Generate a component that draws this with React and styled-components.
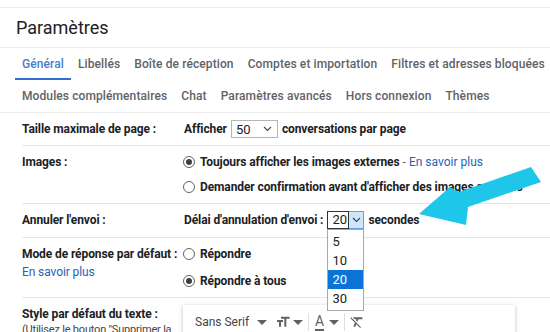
import React from 'react';
import styled, { createGlobalStyle } from 'styled-components';

const GlobalStyle = createGlobalStyle`
    html, body {
        margin: 0;
        padding: 0;
        background: #fff;
    }
    body {
        font-family: Roboto, "Liberation Sans", Arial, sans-serif;
        color: #202124;
    }
`;

const tabsTop = ['Général', 'Libellés', 'Boîte de réception', 'Comptes et importation', 'Filtres et adresses bloquées'];
const tabsBottom = ['Modules complémentaires', 'Chat', 'Paramètres avancés', 'Hors connexion', 'Thèmes'];
const delays = ['5', '10', '20', '30'];

const Caret = () => (
    <svg width="10" height="10" viewBox="7 7 10 10">
        <path d="M7 10l5 5 5-5z" fill="#5f6368" />
    </svg>
);

const Chevron = () => (
    <svg width="9" height="6" viewBox="0 0 9 6">
        <polyline points="1,1 4.5,4.5 8,1" fill="none" stroke="#444" strokeWidth="1.1" />
    </svg>
);

const App = () => {
    return (
        <Page>
            <GlobalStyle />
            <TitleBar>Paramètres</TitleBar>

            <TabRow>
                {tabsTop.map((t, i) => (
                    <Tab key={t} $active={i === 0}>{t}</Tab>
                ))}
            </TabRow>
            <TabRow $last>
                {tabsBottom.map((t) => (
                    <Tab key={t}>{t}</Tab>
                ))}
            </TabRow>

            <Settings>
                <Row>
                    <Label>Taille maximale de page :</Label>
                    <Inline>
                        <Strong>Afficher</Strong>
                        <SelectBox $width={47}>
                            <span>50</span>
                            <Chevron />
                        </SelectBox>
                        <Strong>conversations par page</Strong>
                    </Inline>
                </Row>

                <Row>
                    <Label>Images :</Label>
                    <Stack>
                        <RadioLine>
                            <Radio $checked />
                            <Strong>Toujours afficher les images externes</Strong>
                            <Dash>-</Dash>
                            <Link>En savoir plus</Link>
                        </RadioLine>
                        <RadioLine>
                            <Radio />
                            <Strong>Demander confirmation avant d'afficher des images externes</Strong>
                        </RadioLine>
                    </Stack>
                </Row>

                <Row $pb={8}>
                    <Label>Annuler l'envoi :</Label>
                    <Inline>
                        <Strong>Délai d'annulation d'envoi :</Strong>
                        <OpenSelect>
                            <SelectValue>20</SelectValue>
                            <SelectButton><Chevron /></SelectButton>
                            <DropList>
                                {delays.map((d) => (
                                    <DropItem key={d} $selected={d === '20'}>{d}</DropItem>
                                ))}
                            </DropList>
                        </OpenSelect>
                        <Strong>secondes</Strong>
                    </Inline>
                </Row>

                <Row>
                    <Label>
                        Mode de réponse par défaut :
                        <Link as="div">En savoir plus</Link>
                    </Label>
                    <Stack $gap={9}>
                        <RadioLine>
                            <Radio />
                            <Strong>Répondre</Strong>
                        </RadioLine>
                        <RadioLine>
                            <Radio $checked />
                            <Strong>Répondre à tous</Strong>
                        </RadioLine>
                    </Stack>
                </Row>

                <Row $last>
                    <Label>
                        Style par défaut du texte :
                        <Hint>(Utilisez le bouton "Supprimer la mise en forme")</Hint>
                    </Label>
                    <Toolbar>
                        <FontName>Sans Serif</FontName>
                        <Caret />
                        <ToolGroup $ml={8}>
                            <svg width="16" height="16" viewBox="0 0 24 24">
                                <path d="M9 4v3h5v12h3V7h5V4H9zm-6 8h3v7h3v-7h3V9H3v3z" fill="#5f6368" />
                            </svg>
                            <Caret />
                        </ToolGroup>
                        <Divider />
                        <ToolGroup $ml={6}>
                            <ColorA>A</ColorA>
                            <Caret />
                        </ToolGroup>
                        <Divider />
                        <ToolGroup $ml={4}>
                            <svg width="16" height="16" viewBox="0 0 24 24">
                                <path d="M3.27 5L2 6.27l6.97 6.97L6.5 19h3l1.57-3.66L16.73 21 18 19.73 3.55 5.27 3.27 5zM6 5v.18L8.82 8h2.4l-.72 1.68 2.1 2.1L14.21 8H20V5H6z" fill="#5f6368" />
                            </svg>
                        </ToolGroup>
                    </Toolbar>
                </Row>
            </Settings>

            {/* arrow drawn on top of the screenshot */}
            <Overlay width="550" height="332" viewBox="0 0 550 332">
                <polygon
                    points="419,214 450,187 459,192 531,167 541,182 468,207 466,225"
                    fill="#1ec6ea"
                />
            </Overlay>
        </Page>
    );
};

const Page = styled.div`
    position: relative;
    width: 550px;
    height: 332px;
    overflow: hidden;
    padding-top: 7px;
    box-sizing: border-box;
`;

const TitleBar = styled.div`
    height: 39px;
    line-height: 40px;
    padding-left: 16px;
    border-top: 1px solid #ececec;
    border-bottom: 1px solid #ececec;
    font-size: 18px;
    color: #202124;
`;

const TabRow = styled.div`
    display: flex;
    height: 32px;
    padding-left: 15px;
    white-space: nowrap;
    border-bottom: ${(p) => (p.$last ? '1px solid #ececec' : 'none')};
`;

const Tab = styled.div`
    display: flex;
    align-items: center;
    padding: 0 7px;
    font-size: 12px;
    font-weight: 500;
    letter-spacing: 0.1px;
    color: ${(p) => (p.$active ? '#4a80c8' : '#5f6368')};
    box-shadow: ${(p) => (p.$active ? 'inset 0 -2px 0 #2f6fd0' : 'none')};
`;

const Settings = styled.div`
    padding-left: 22px;
`;

const Row = styled.div`
    display: grid;
    grid-template-columns: 162px 1fr;
    padding: 7px 0 ${(p) => p.$pb ?? 7}px;
    border-bottom: ${(p) => (p.$last ? 'none' : '1px solid #e6e6e6')};
`;

const Label = styled.div`
    font-size: 12px;
    font-weight: 700;
    line-height: 18px;
    letter-spacing: -0.1px;
    color: #202124;
    white-space: nowrap;
`;

const Hint = styled.div`
    width: 150px;
    font-size: 11px;
    font-weight: 400;
    line-height: 14px;
    letter-spacing: -0.2px;
    color: #444;
    white-space: normal;
`;

const Inline = styled.div`
    display: flex;
    align-items: center;
    gap: 4px;
    height: 18px;
    white-space: nowrap;
`;

const Stack = styled.div`
    display: flex;
    flex-direction: column;
    gap: ${(p) => p.$gap ?? 7}px;
`;

const Strong = styled.span`
    font-size: 12px;
    font-weight: 700;
    line-height: 18px;
    letter-spacing: -0.1px;
    color: #202124;
    white-space: nowrap;
`;

const Dash = styled.span`
    font-size: 12px;
    color: #5f6368;
    margin: 0 3px;
`;

const Link = styled.span`
    font-size: 12px;
    font-weight: 400;
    line-height: 18px;
    color: #2a62b8;
    white-space: nowrap;
`;

const RadioLine = styled.div`
    display: flex;
    align-items: center;
    height: 18px;
    margin-left: -1px;
`;

const Radio = styled.span`
    position: relative;
    width: 10px;
    height: 10px;
    border: 1px solid #5f6368;
    border-radius: 50%;
    margin-right: 5px;
    flex-shrink: 0;

    &::after {
        content: '';
        display: ${(p) => (p.$checked ? 'block' : 'none')};
        position: absolute;
        left: 2px;
        top: 2px;
        width: 6px;
        height: 6px;
        border-radius: 50%;
        background: #3c4043;
    }
`;

const SelectBox = styled.div`
    display: flex;
    align-items: center;
    justify-content: space-between;
    box-sizing: border-box;
    width: ${(p) => p.$width}px;
    height: 18px;
    padding: 0 5px 0 4px;
    border: 1px solid #b5b5b5;
    font-size: 13px;
    color: #222;
`;

const OpenSelect = styled.div`
    position: relative;
    display: flex;
    height: 18px;
`;

const SelectValue = styled.div`
    box-sizing: border-box;
    width: 22px;
    height: 18px;
    padding-left: 4px;
    border: 1px solid #333;
    font-size: 13px;
    line-height: 16px;
    color: #222;
`;

const SelectButton = styled.div`
    display: flex;
    align-items: center;
    justify-content: center;
    box-sizing: border-box;
    width: 15px;
    height: 18px;
    border: 1px solid #5fa3e0;
    border-left: none;
    background: #cfe6fb;
`;

const DropList = styled.div`
    position: absolute;
    top: 18px;
    left: 0;
    width: 37px;
    padding: 2px 0;
    box-sizing: border-box;
    background: #fff;
    border: 1px solid #a8a8a8;
    z-index: 2;
`;

const DropItem = styled.div`
    height: 19px;
    line-height: 19px;
    padding-left: 4px;
    font-size: 13px;
    color: ${(p) => (p.$selected ? '#fff' : '#222')};
    background: ${(p) => (p.$selected ? '#0a74d6' : 'transparent')};
`;

const Toolbar = styled.div`
    display: flex;
    align-items: center;
    width: 332px;
    height: 34px;
    margin-left: -1px;
    padding-left: 12px;
    box-sizing: border-box;
    background: #fff;
    box-shadow: 0 1px 4px rgba(0, 0, 0, 0.25);
`;

const FontName = styled.span`
    font-size: 12px;
    color: #444;
    margin-right: 8px;
`;

const ToolGroup = styled.div`
    display: flex;
    align-items: center;
    gap: 2px;
    margin-left: ${(p) => p.$ml || 0}px;
`;

const Divider = styled.span`
    width: 1px;
    height: 18px;
    margin-left: 5px;
    background: #e0e0e0;
`;

const ColorA = styled.span`
    font-size: 14px;
    line-height: 14px;
    color: #5f6368;
    padding-bottom: 1px;
    border-bottom: 2px solid #5f6368;
    margin-right: 3px;
`;

const Overlay = styled.svg`
    position: absolute;
    left: 0;
    top: 0;
    pointer-events: none;
`;

export default App;
